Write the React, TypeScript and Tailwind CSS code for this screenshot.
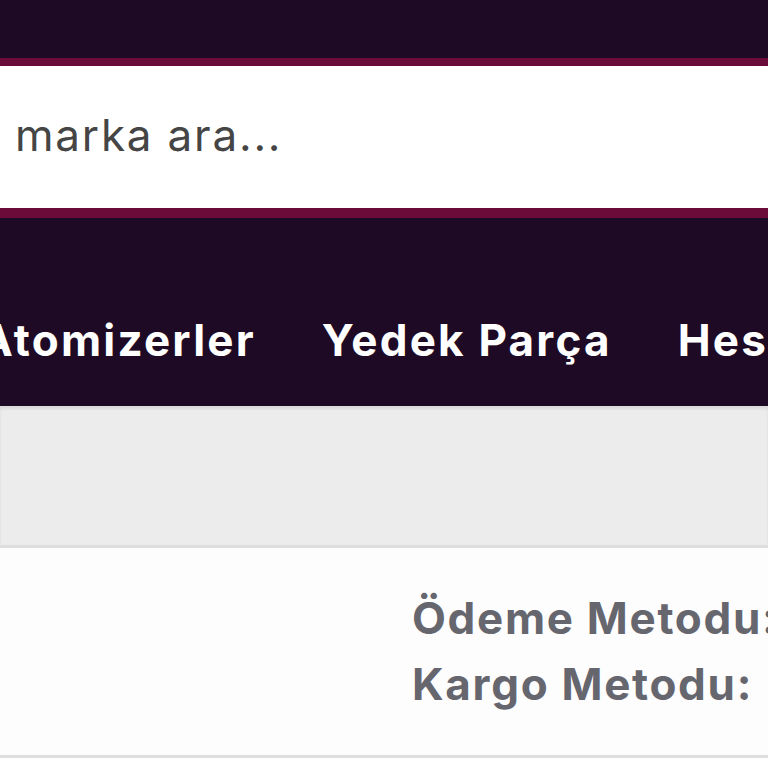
import React from 'react';

const navItems = ['Atomizerler', 'Yedek Parça', 'Hesap'];

const App: React.FC = () => {
    return (
        <div className="w-[768px] h-[768px] overflow-hidden bg-white font-['Inter',sans-serif]">
            <header className="bg-[#1e0a24]">
                <div className="h-[58px]" />
                <div className="h-[160px] border-t-8 border-b-[10px] border-[#6a0b3a] bg-white flex items-center">
                    <span className="pl-[15px] text-[44px] text-[#454545] tracking-[1.8px] leading-none -mt-[4px]">
                        marka ara...
                    </span>
                </div>
                <nav className="h-[188px] overflow-hidden">
                    <ul className="flex gap-[66px] whitespace-nowrap pt-[100px] -ml-[20px]">
                        {navItems.map((item) => (
                            <li key={item} className="text-[44px] font-bold text-white leading-none tracking-[2.2px]">
                                {item}
                            </li>
                        ))}
                    </ul>
                </nav>
            </header>

            <div className="h-[139px] bg-[#ececec] shadow-[inset_0_3px_3px_rgba(0,0,0,0.08)]" />

            <section className="h-[213px] border-y-[3px] border-[#dedede] bg-[#fdfdfd] flex overflow-hidden">
                <div className="w-[412px] shrink-0" />
                <div className="shrink-0 pt-[48px] flex flex-col gap-[22px] text-[44px] font-bold text-[#66666f] leading-none whitespace-nowrap tracking-[1.7px]">
                    <span>Ödeme Metodu:</span>
                    <span>Kargo Metodu:</span>
                </div>
            </section>
        </div>
    );
};

export default App;
